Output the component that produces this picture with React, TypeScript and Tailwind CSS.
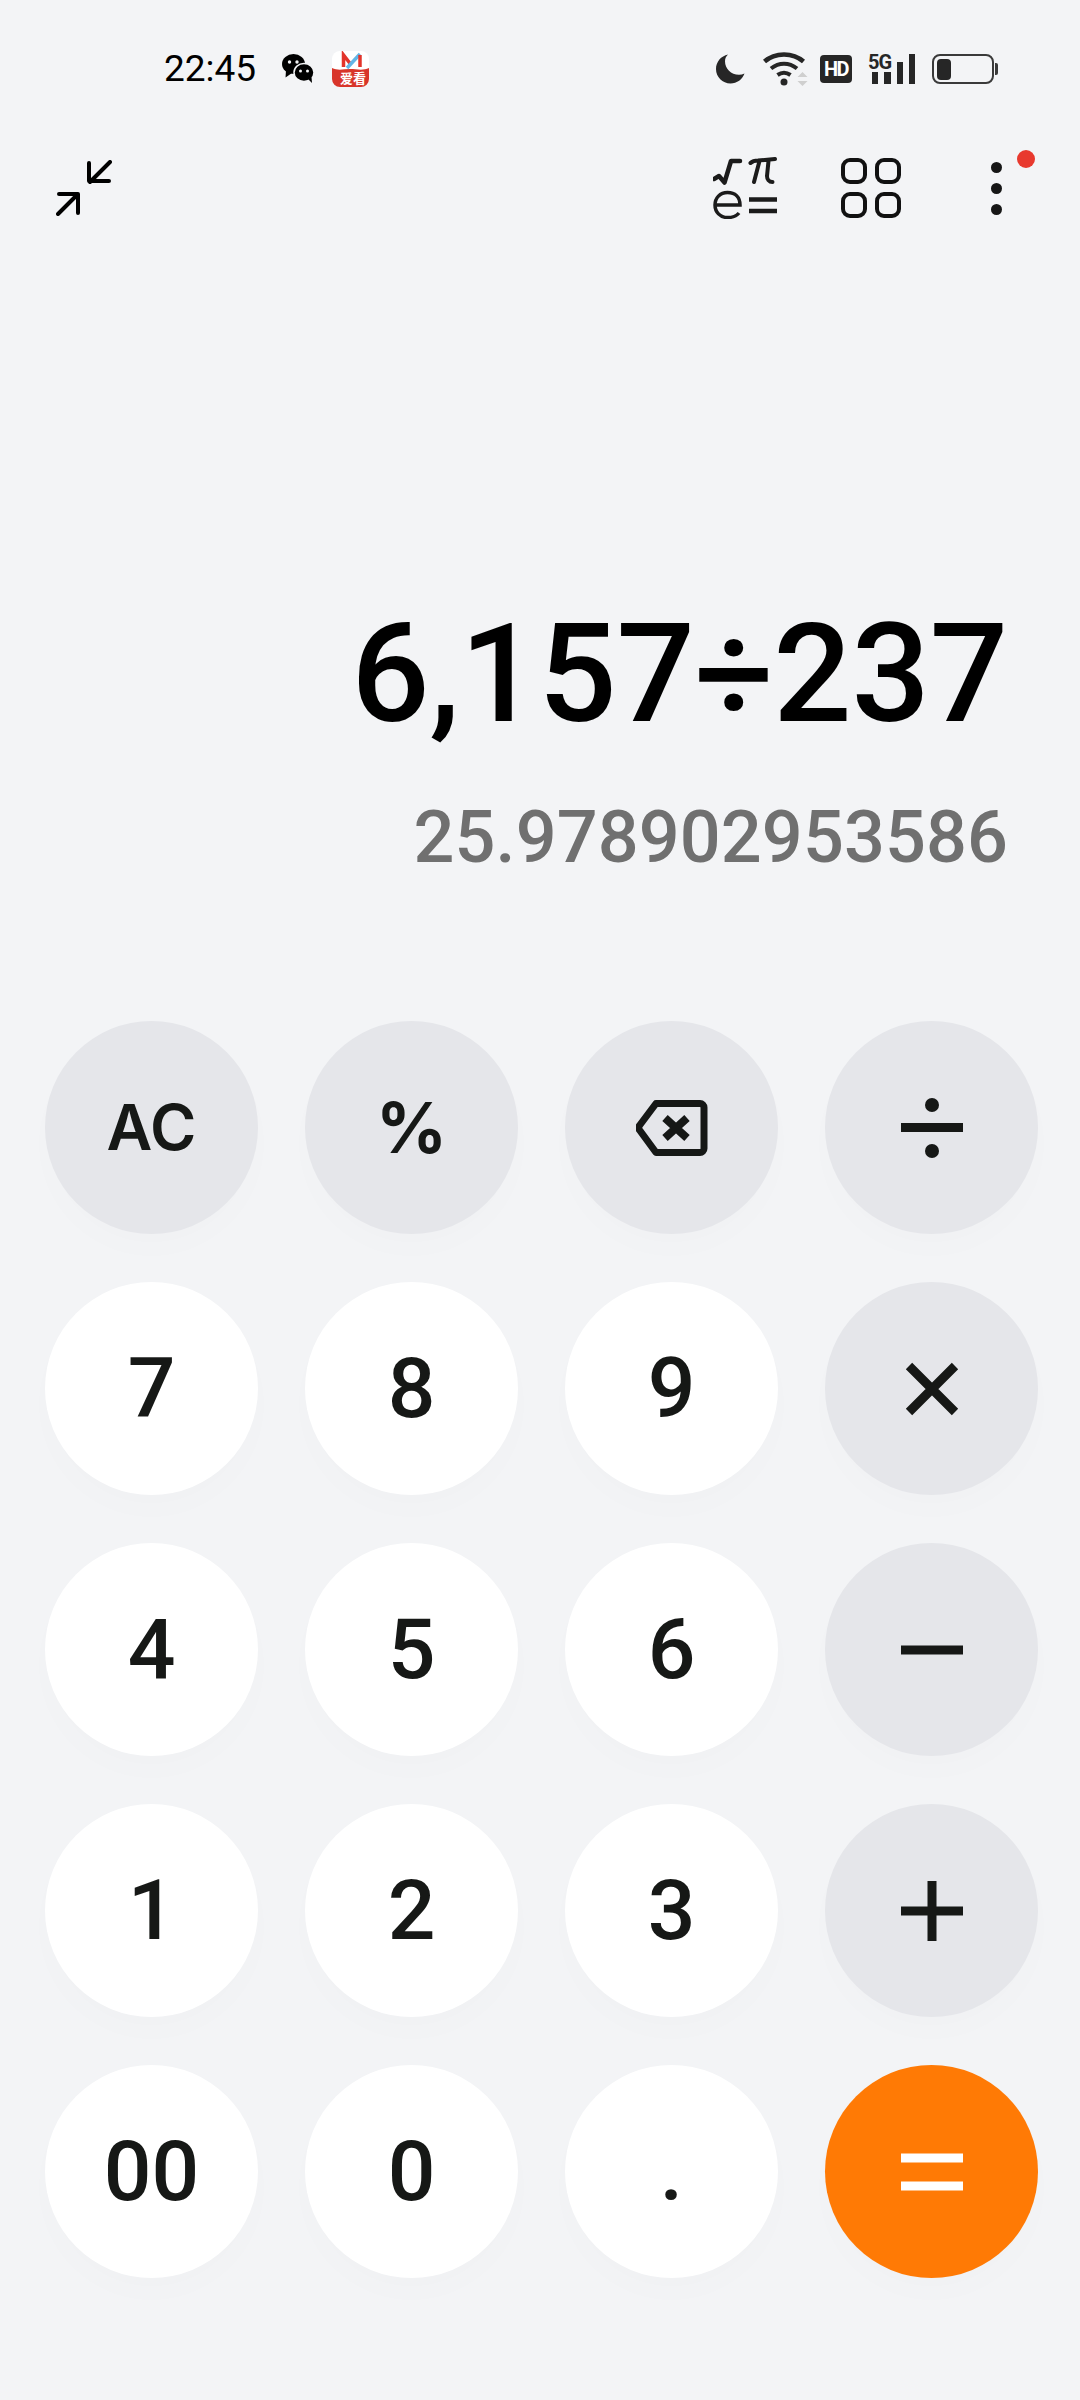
import React from "react";

const WeChatIcon = () => (
  <svg width="32" height="30" viewBox="0 0 32 30">
    <ellipse cx="11.500" cy="10" rx="11.500" ry="10" fill="#000" />
    <path d="M4 16L3.500 23.500 10 19z" fill="#000" />
    <ellipse cx="22" cy="18.500" rx="10" ry="9" fill="#000" stroke="#f3f4f6" strokeWidth="1.500" />
    <path d="M26 25l4 4-.5-6z" fill="#000" />
    <circle cx="7.500" cy="8" r="1.700" fill="#f3f4f6" />
    <circle cx="15" cy="8" r="1.700" fill="#f3f4f6" />
    <circle cx="18.500" cy="17" r="1.500" fill="#f3f4f6" />
    <circle cx="25.500" cy="17" r="1.500" fill="#f3f4f6" />
  </svg>
);

const AppIcon = () => (
  <svg width="37" height="36" viewBox="0 0 37 36">
    <rect width="37" height="36" rx="8" fill="#fff" />
    <path d="M0 17c6 3 12 1 18 1s13 2 19-1v11a8 8 0 0 1-8 8H8a8 8 0 0 1-8-8z" fill="#d8352a" />
    <path d="M11.500 16V4l7 9" fill="none" stroke="#e2342b" strokeWidth="3.500" />
    <path d="M15 17L28 3" fill="none" stroke="#63b5e6" strokeWidth="3.500" />
    <path d="M28 4v12" fill="none" stroke="#e2342b" strokeWidth="3.500" />
    <text x="21" y="32" textAnchor="middle" fill="#fff" fontSize="13" fontWeight="700" fontFamily="'Noto Sans CJK SC', sans-serif">
      爱看
    </text>
  </svg>
);

const StatusIcons = () => (
  <div className="flex items-center">
    <svg width="30" height="30" viewBox="0 0 30 30">
      <path d="M12 0.500C5 2 0 7.800 0 15c0 8 6.500 14.500 14.500 14.500 6.500 0 12-4.200 14-10-1.700.8-3.500 1.200-5.500 1.200-8 0-14-6-14-13.500C9 4.700 10 2.400 12 .5z" fill="#262626" />
    </svg>
    <svg className="ml-[17px]" width="45" height="34" viewBox="0 0 45 34">
      <path d="M1.500 9.500C12 0 30 0 40.500 9.500" fill="none" stroke="#262626" strokeWidth="4.500" />
      <path d="M8 16.500C16 10 26 10 34 16.500" fill="none" stroke="#262626" strokeWidth="4" />
      <path d="M14.500 23C19 19.800 23 19.800 27.500 23" fill="none" stroke="#262626" strokeWidth="4" />
      <circle cx="21" cy="30" r="3.500" fill="#262626" />
      <path d="M39.500 20l5 5h-10zM39.500 34l5-5h-10z" fill="#cfcfcf" />
    </svg>
    <div className="ml-[12px] flex h-[28px] w-[32px] items-center justify-center rounded-[4px] bg-[#262626] text-[20px] leading-none font-bold tracking-[-1.500px] text-white">
      HD
    </div>
    <div className="relative ml-[16px] flex h-[30px] w-[47px] items-end gap-[6px] pl-[4px]">
      <span className="absolute top-[-2px] left-0 text-[20px] leading-none font-bold tracking-[-1px] text-[#262626]">
        5G
      </span>
      <div className="h-[12px] w-[7px] bg-[#262626]" />
      <div className="h-[12px] w-[7px] bg-[#262626]" />
      <div className="h-[22px] w-[7px] bg-[#262626]" />
      <div className="h-[30px] w-[7px] bg-[#262626]" />
    </div>
    <div className="ml-[17px] flex items-center">
      <div className="flex h-[30px] w-[62px] items-center rounded-[8px] border-[2px] border-[#3a3a3a] p-[3px]">
        <div className="h-[21px] w-[14px] rounded-[4px] bg-[#262626]" />
      </div>
      <div className="ml-[1px] h-[12px] w-[3px] rounded-r-[2px] bg-[#3a3a3a]" />
    </div>
  </div>
);

const CollapseIcon = () => (
  <svg width="56" height="56" viewBox="0 0 56 56" fill="none" stroke="#000" strokeWidth="4" strokeLinecap="round" strokeLinejoin="round">
    <path d="M54 2L34 22M33 3V21H53" />
    <path d="M2 54L21 35M3 34H22V53" />
  </svg>
);

const SciIcon = () => (
  <svg width="66" height="62" viewBox="0 0 66 62" fill="none" stroke="#1b1b1b">
    <path d="M1 22l5-3 5.500 6.500L18 4h9" strokeWidth="4.500" strokeLinejoin="round" strokeLinecap="round" />
    <path d="M37.500 6C40 3.500 42 3.500 45 3.500L62 2M46.500 4L41 25M55.500 4L54 19c0 3 2 6 5.500 6" strokeWidth="4" strokeLinecap="round" />
    <path d="M2 48h25c0-8-5-12.500-12.500-12.500S2 41 2 48s5 12.500 12.500 12.500c5 0 9-1.500 11.500-4.500" strokeWidth="3.500" />
    <path d="M36 42.500h28M36 54h28" strokeWidth="4.500" />
  </svg>
);

const GridIcon = () => (
  <div className="grid grid-cols-2 gap-[8px]">
    <div className="h-[26px] w-[26px] rounded-[9px] border-[4px] border-[#111]" />
    <div className="h-[26px] w-[26px] rounded-[9px] border-[4px] border-[#111]" />
    <div className="h-[26px] w-[26px] rounded-[9px] border-[4px] border-[#111]" />
    <div className="h-[26px] w-[26px] rounded-[9px] border-[4px] border-[#111]" />
  </div>
);

const BackspaceIcon = () => (
  <svg width="72" height="56" viewBox="0 0 72 56" fill="none" stroke="#161816">
    <path d="M20 3.500H64a4 4 0 0 1 4 4v41a4 4 0 0 1-4 4H20L3.500 30a4 4 0 0 1 0-4.500z" strokeWidth="7" strokeLinejoin="round" />
    <path d="M29 18l22 20M51 18L29 38" strokeWidth="8" />
  </svg>
);

const DivideIcon = () => (
  <svg width="62" height="62" viewBox="0 0 62 62" fill="#161816">
    <circle cx="31" cy="8" r="7" />
    <rect x="0" y="26" width="62" height="9" />
    <circle cx="31" cy="54" r="7" />
  </svg>
);

const PlainIcon = ({ d, white }: { d: string; white?: boolean }) => (
  <svg width="62" height="62" viewBox="0 0 62 62" fill="none" stroke={white ? "#fff" : "#161816"} strokeWidth="9">
    <path d={d} />
  </svg>
);

type KeyDef = { label: React.ReactNode; kind: "fn" | "op" | "num" | "eq"; className?: string };

const keys: KeyDef[] = [
  { label: "AC", kind: "fn", className: "font-['Inter',sans-serif] text-[63px] font-semibold" },
  { label: "%", kind: "fn", className: "font-['Inter',sans-serif] text-[70px] font-bold" },
  { label: <BackspaceIcon />, kind: "op" },
  { label: <DivideIcon />, kind: "op" },
  { label: "7", kind: "num" },
  { label: "8", kind: "num" },
  { label: "9", kind: "num" },
  { label: <PlainIcon d="M8 8l46 46M54 8L8 54" />, kind: "op" },
  { label: "4", kind: "num" },
  { label: "5", kind: "num" },
  { label: "6", kind: "num" },
  { label: <PlainIcon d="M0 31h62" />, kind: "op" },
  { label: "1", kind: "num" },
  { label: "2", kind: "num" },
  { label: "3", kind: "num" },
  { label: <PlainIcon d="M0 31h62M31 1v60" />, kind: "op" },
  { label: "00", kind: "num" },
  { label: "0", kind: "num" },
  { label: ".", kind: "num" },
  { label: <PlainIcon d="M0 17h62M0 45h62" white />, kind: "eq" },
];

const Key = ({ label, kind, className }: KeyDef) => {
  let bg = "bg-white";
  if (kind === "op" || kind === "fn") bg = "bg-[#e5e6ea]";
  if (kind === "eq") bg = "bg-[#ff7a05]";
  return (
    <button className={`flex h-[213px] w-[213px] items-center justify-center rounded-full leading-none text-[#161816] shadow-[0_16px_32px_rgba(0,0,0,0.01)] ${bg} ${className ?? "text-[84px] font-medium"}`}>
      {label}
    </button>
  );
};

export default function App() {
  return (
    <div className="flex h-[2400px] w-[1080px] flex-col bg-[#f3f4f6] font-['Roboto',sans-serif]">
      <div className="mt-[50px] flex h-[38px] items-center justify-between pr-[82px] pl-[164px]">
        <div className="flex items-center">
          <span className="text-[37px] leading-[38px] text-black">22:45</span>
          <div className="ml-[26px] flex">
            <WeChatIcon />
          </div>
          <div className="ml-[18px] flex">
            <AppIcon />
          </div>
        </div>
        <StatusIcons />
      </div>

      <div className="mt-[70px] flex h-[60px] items-center pr-[78px] pl-[56px]">
        <CollapseIcon />
        <div className="ml-auto flex">
          <SciIcon />
        </div>
        <div className="ml-[62px]">
          <GridIcon />
        </div>
        <div className="relative ml-[90px] flex flex-col gap-[10px]">
          <div className="h-[11px] w-[11px] rounded-full bg-[#161616]" />
          <div className="h-[11px] w-[11px] rounded-full bg-[#161616]" />
          <div className="h-[11px] w-[11px] rounded-full bg-[#161616]" />
          <div className="absolute top-[-12px] left-[26px] h-[18px] w-[18px] rounded-full bg-[#e8392e]" />
        </div>
      </div>

      <div className="mt-[375px] flex flex-col items-end pr-[72px]">
        <div className="text-[138px] leading-[162px] font-medium tracking-[-0.2px] text-black">6,157÷237</div>
        <div className="mt-[41px] text-[72px] leading-[84px] font-medium tracking-[0.1px] text-[#707070]">25.978902953586</div>
      </div>

      <div className="mt-[141px] grid grid-cols-[repeat(4,213px)] gap-x-[47px] gap-y-[48px] pl-[45px]">
        {keys.map((k, i) => (
          <Key key={i} {...k} />
        ))}
      </div>
    </div>
  );
}
